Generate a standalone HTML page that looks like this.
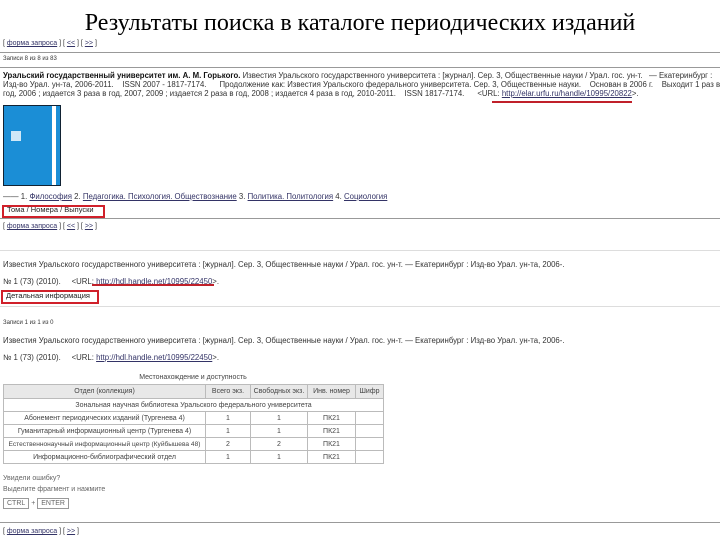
<!DOCTYPE html>
<html><head><meta charset="utf-8"><style>
body{margin:0;width:720px;height:540px;background:#fff;position:relative;overflow:hidden;font-family:"Liberation Sans",sans-serif;font-size:7px;color:#333}
.a{position:absolute;white-space:nowrap}
.b{font-size:7.8px}
.t{position:absolute;left:0;width:720px;text-align:center;top:10px;font-family:"Liberation Serif",serif;font-size:24px;color:#000}
.hr{position:absolute;left:0;width:720px;height:1px;background:#999}
.lh{position:absolute;left:0;width:720px;height:1px;background:#ddd}
a{color:#336;text-decoration:underline}
.red{position:absolute;border:2px solid #d0202a}
.ru{position:absolute;height:2px;background:#c0202a}
table{position:absolute;left:3px;top:384px;border-collapse:collapse;font-size:7px;color:#444}
td{border:1px solid #bbb;text-align:center;height:12px;padding:0;white-space:nowrap}
th{border:1px solid #bbb;background:#e8e8e8;font-weight:normal;height:13px;padding:0;white-space:nowrap}
.k{display:inline-block;border:1px solid #999;padding:1px 3px;font-size:7px}
</style></head><body>
<div class="t">Результаты поиска в каталоге периодических изданий</div>
<div class="a" style="left:3px;top:40px">[ <a>форма запроса</a> ] [ <a>&lt;&lt;</a> ] [ <a>&gt;&gt;</a> ]</div>
<div class="hr" style="top:52px"></div>
<div class="a" style="left:3px;top:56px;font-size:6px">Записи 8 из 8 из 83</div>
<div class="hr" style="top:67px"></div>
<div class="a b" style="left:3px;top:71px"><b style="color:#111">Уральский государственный университет им. А. М. Горького.</b> Известия Уральского государственного университета : [журнал]. Сер. 3, Общественные науки / Урал. гос. ун-т. &nbsp;&nbsp;— Екатеринбург :</div>
<div class="a b" style="left:3px;top:80px">Изд-во Урал. ун-та, 2006-2011. &nbsp;&nbsp; ISSN 2007 - 1817-7174. &nbsp;&nbsp;&nbsp;&nbsp; Продолжение как: Известия Уральского федерального университета. Сер. 3, Общественные науки. &nbsp;&nbsp; Основан в 2006 г. &nbsp;&nbsp; Выходит 1 раз в</div>
<div class="a b" style="left:3px;top:89px">год, 2006 ; издается 3 раза в год, 2007, 2009 ; издается 2 раза в год, 2008 ; издается 4 раза в год, 2010-2011. &nbsp;&nbsp; ISSN 1817-7174. &nbsp;&nbsp;&nbsp;&nbsp; &lt;URL: <a>http://elar.urfu.ru/handle/10995/20822</a>&gt;.</div>
<div class="ru" style="left:492px;top:101px;width:140px"></div>
<div class="a" style="left:3px;top:105px;width:56px;height:79px;background:#1b8ed6;border:1px solid #123"><div style="position:absolute;right:4px;top:0;width:4px;height:79px;background:#fff"></div><div style="position:absolute;left:7px;top:25px;width:10px;height:10px;background:#fff;opacity:.8"></div></div>
<div class="a b" style="left:3px;top:192px">—— 1. <a>Философия</a> 2. <a>Педагогика. Психология. Обществознание</a> 3. <a>Политика. Политология</a> 4. <a>Социология</a></div>
<div class="red" style="left:2px;top:205px;width:99px;height:9px"></div>
<div class="a" style="left:7px;top:205px;color:#222;font-size:7.5px;line-height:10px">Тома / Номера / Выпуски</div>
<div class="hr" style="top:218px"></div>
<div class="a" style="left:3px;top:223px">[ <a>форма запроса</a> ] [ <a>&lt;&lt;</a> ] [ <a>&gt;&gt;</a> ]</div>
<div class="lh" style="top:250px"></div>
<div class="a b" style="left:3px;top:260px">Известия Уральского государственного университета : [журнал]. Сер. 3, Общественные науки / Урал. гос. ун-т. — Екатеринбург : Изд-во Урал. ун-та, 2006-.</div>
<div class="a b" style="left:3px;top:277px">№ 1 (73) (2010). &nbsp;&nbsp;&nbsp; &lt;URL: <a>http://hdl.handle.net/10995/22450</a>&gt;.</div>
<div class="ru" style="left:92px;top:284px;width:122px"></div>
<div class="red" style="left:1px;top:290px;width:94px;height:10px"></div>
<div class="a" style="left:6px;top:290px;color:#222;font-size:7.5px;line-height:12px">Детальная информация</div>
<div class="lh" style="top:306px"></div>
<div class="a" style="left:3px;top:320px;font-size:6px">Записи 1 из 1 из 0</div>
<div class="a b" style="left:3px;top:336px">Известия Уральского государственного университета : [журнал]. Сер. 3, Общественные науки / Урал. гос. ун-т. — Екатеринбург : Изд-во Урал. ун-та, 2006-.</div>
<div class="a b" style="left:3px;top:353px">№ 1 (73) (2010). &nbsp;&nbsp;&nbsp; &lt;URL: <a>http://hdl.handle.net/10995/22450</a>&gt;.</div>
<div class="a" style="left:3px;top:374px;width:380px;text-align:center;color:#444">Местонахождение и доступность</div>
<table>
<tr><th style="width:201px">Отдел (коллекция)</th><th style="width:44px">Всего экз.</th><th style="width:56px">Свободных экз.</th><th style="width:47px">Инв. номер</th><th style="width:27px">Шифр</th></tr>
<tr><td colspan="5">Зональная научная библиотека Уральского федерального университета</td></tr>
<tr><td>Абонемент периодических изданий (Тургенева 4)</td><td>1</td><td>1</td><td>ПК21</td><td></td></tr>
<tr><td>Гуманитарный информационный центр (Тургенева 4)</td><td>1</td><td>1</td><td>ПК21</td><td></td></tr>
<tr><td style="font-size:6.6px">Естественнонаучный информационный центр (Куйбышева 48)</td><td>2</td><td>2</td><td>ПК21</td><td></td></tr>
<tr><td>Информационно-библиографический отдел</td><td>1</td><td>1</td><td>ПК21</td><td></td></tr>
</table>
<div class="a" style="left:3px;top:475px;color:#666">Увидели ошибку?</div>
<div class="a" style="left:3px;top:486px;color:#666">Выделите фрагмент и нажмите</div>
<div class="a" style="left:3px;top:498px;color:#666"><span class="k">CTRL</span> + <span class="k">ENTER</span></div>
<div class="hr" style="top:522px"></div>
<div class="a" style="left:3px;top:528px">[ <a>форма запроса</a> ] [ <a>&gt;&gt;</a> ]</div>
</body></html>
